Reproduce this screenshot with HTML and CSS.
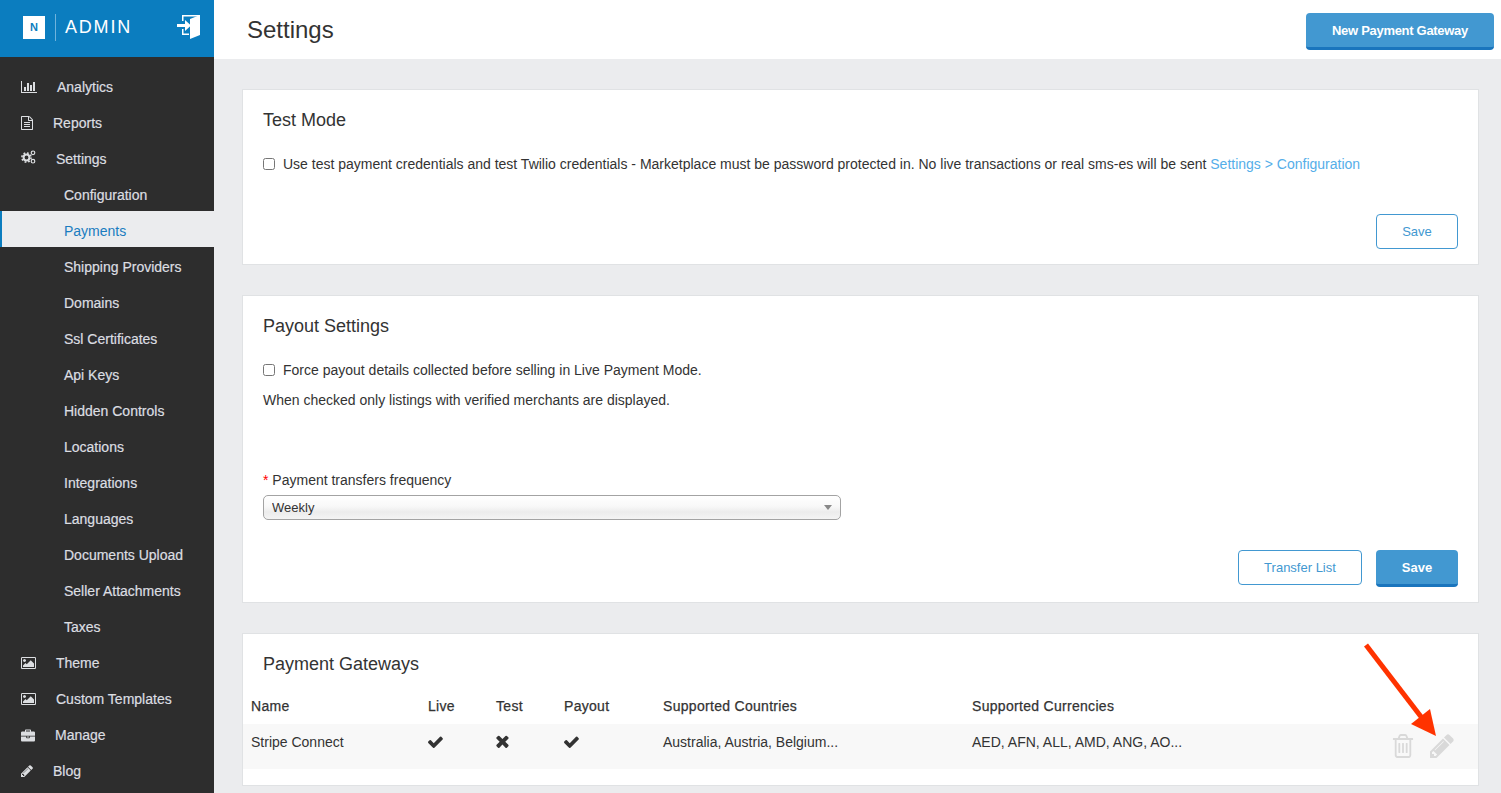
FILE: index.html
```html
<!DOCTYPE html>
<html lang="en">
<head>
    <meta charset="UTF-8">
    <meta name="viewport" content="width=device-width, initial-scale=1.0">
    <title>Settings</title>
    <link rel="stylesheet" href="styles.css">
</head>
<body>
    <svg class="sprites" width="0" height="0">
        <symbol id="icon-picture" viewBox="-64 128 1920 1536"><path d="M576 576q0 80-56 136t-136 56-136-56-56-136 56-136 136-56 136 56 56 136zm1024 384v448h-1408v-192l320-320 160 160 512-512zm96-704h-1600q-13 0-22.500 9.500t-9.500 22.500v1216q0 13 9.500 22.500t22.500 9.500h1600q13 0 22.500-9.500t9.500-22.500v-1216q0-13-9.500-22.500t-22.500-9.500zm160 32v1216q0 66-47 113t-113 47h-1600q-66 0-113-47t-47-113v-1216q0-66 47-113t113-47h1600q66 0 113 47t47 113z"/></symbol>
        <symbol id="icon-pencil" viewBox="128 128 1536 1536"><path d="M491 1536l91-91-235-235-91 91v107h128v128h107zm523-928q0-22-22-22-10 0-17 7l-542 542q-7 7-7 17 0 22 22 22 10 0 17-7l542-542q7-7 7-17zm-54-192l416 416-832 832h-416v-416zm683 96q0 53-37 90l-166 166-416-416 166-165q36-38 90-38 53 0 91 38l235 234q37 39 37 91z"/></symbol>
        <symbol id="icon-check" viewBox="120 300 1560 1200"><path d="M1671 566q0 40-28 68l-724 724-136 136q-28 28-68 28t-68-28l-136-136-362-362q-28-28-28-68t28-68l136-136q28-28 68-28t68 28l294 295 656-657q28-28 68-28t68 28l136 136q28 28 28 68z"/></symbol>
    </svg>

    <div class="layout">
        <aside class="sidebar">
            <div class="brand">
                <span class="brand-mark">N</span>
                <span class="brand-name">ADMIN</span>
                <svg class="brand-exit" viewBox="0 0 24 24" width="24" height="24" fill="#fff">
                    <path d="M5 0h18v1.500H6.500V6H5z"/>
                    <path d="M5 14h1.500v4.500H12V20H5z"/>
                    <path d="M13 4L23 0V20L13 24z"/>
                    <path d="M0 9h8V5l6 5.500-6 5.500v-4H0z"/>
                </svg>
            </div>
            <nav class="nav">
                <a class="nav-item">
                    <svg class="nav-icon" width="16" height="14" viewBox="0 0 2048 1792"><path d="M640 896v512h-256v-512h256zm384-512v1024h-256v-1024h256zm1024 1152v128h-2048v-1536h128v1408h1920zm-640-896v768h-256v-768h256zm384-384v1152h-256v-1152h256z"/></svg>
                    Analytics
                </a>
                <a class="nav-item">
                    <svg class="nav-icon" width="12" height="14" viewBox="128 0 1536 1792"><path d="M1596 380q28 28 48 76t20 88v1152q0 40-28 68t-68 28h-1344q-40 0-68-28t-28-68v-1600q0-40 28-68t68-28h896q40 0 88 20t76 48zm-444-244v376h376q-10-29-22-41l-313-313q-12-12-41-22zm384 1528v-1024h-416q-40 0-68-28t-28-68v-416h-768v1536h1280zm-1024-864q0-14 9-23t23-9h704q14 0 23 9t9 23v64q0 14-9 23t-23 9h-704q-14 0-23-9t-9-23v-64zm736 224q14 0 23 9t9 23v64q0 14-9 23t-23 9h-704q-14 0-23-9t-9-23v-64q0-14 9-23t23-9h704zm0 256q14 0 23 9t9 23v64q0 14-9 23t-23 9h-704q-14 0-23-9t-9-23v-64q0-14 9-23t23-9h704z"/></svg>
                    Reports
                </a>
                <a class="nav-item">
                    <svg class="nav-icon" width="15" height="14" viewBox="0 2 15 14">
                        <circle cx="5.500" cy="7.500" r="2.900" fill="none" stroke="#dcdee1" stroke-width="2"/>
                        <circle cx="5.500" cy="7.500" r="4.600" fill="none" stroke="#dcdee1" stroke-width="1.600" stroke-dasharray="1.800 1.800"/>
                        <circle cx="12" cy="2.800" r="1.800" fill="none" stroke="#dcdee1" stroke-width="1.200"/>
                        <circle cx="12" cy="11.200" r="1.800" fill="none" stroke="#dcdee1" stroke-width="1.200"/>
                    </svg>
                    Settings
                </a>
                <a class="nav-sub">Configuration</a>
                <a class="nav-sub active">Payments</a>
                <a class="nav-sub">Shipping Providers</a>
                <a class="nav-sub">Domains</a>
                <a class="nav-sub">Ssl Certificates</a>
                <a class="nav-sub">Api Keys</a>
                <a class="nav-sub">Hidden Controls</a>
                <a class="nav-sub">Locations</a>
                <a class="nav-sub">Integrations</a>
                <a class="nav-sub">Languages</a>
                <a class="nav-sub">Documents Upload</a>
                <a class="nav-sub">Seller Attachments</a>
                <a class="nav-sub">Taxes</a>
                <a class="nav-item">
                    <svg class="nav-icon" width="15" height="12"><use href="#icon-picture"/></svg>
                    Theme
                </a>
                <a class="nav-item">
                    <svg class="nav-icon" width="15" height="12"><use href="#icon-picture"/></svg>
                    Custom Templates
                </a>
                <a class="nav-item">
                    <svg class="nav-icon" width="14" height="13" viewBox="0 128 1792 1536"><path d="M640 384h512v-128h-512v128zm1152 640v480q0 66-47 113t-113 47h-1472q-66 0-113-47t-47-113v-480h672v160q0 26 19 45t45 19h320q26 0 45-19t19-45v-160h672zm-768 0v128h-256v-128h256zm768-480v384h-1792v-384q0-66 47-113t113-47h352v-160q0-40 28-68t68-28h576q40 0 68 28t28 68v160h352q66 0 113 47t47 113z"/></svg>
                    Manage
                </a>
                <a class="nav-item">
                    <svg class="nav-icon" width="12" height="12"><use href="#icon-pencil"/></svg>
                    Blog
                </a>
            </nav>
        </aside>

        <div class="page">
            <header class="topbar">
                <h1>Settings</h1>
                <button class="btn btn-primary btn-new">New Payment Gateway</button>
            </header>

            <main class="content">
                <section class="card card-test">
                    <h2>Test Mode</h2>
                    <label class="check-row">
                        <input type="checkbox">
                        <span>Use test payment credentials and test Twilio credentials - Marketplace must be password protected in. No live transactions or real sms-es will be sent <a class="link">Settings &gt; Configuration</a></span>
                    </label>
                    <div class="card-actions">
                        <button class="btn btn-outline btn-save">Save</button>
                    </div>
                </section>

                <section class="card card-payout">
                    <h2>Payout Settings</h2>
                    <label class="check-row">
                        <input type="checkbox">
                        <span>Force payout details collected before selling in Live Payment Mode.</span>
                    </label>
                    <p class="hint">When checked only listings with verified merchants are displayed.</p>
                    <label class="field-label"><span class="required">*</span> Payment transfers frequency</label>
                    <div class="select-wrap">
                        <select>
                            <option>Weekly</option>
                        </select>
                    </div>
                    <div class="card-actions">
                        <button class="btn btn-outline btn-transfer">Transfer List</button>
                        <button class="btn btn-primary btn-save">Save</button>
                    </div>
                </section>

                <section class="card card-gateways">
                    <h2>Payment Gateways</h2>
                    <table class="gateways">
                        <thead>
                            <tr>
                                <th class="col-name">Name</th>
                                <th class="col-flag">Live</th>
                                <th class="col-flag">Test</th>
                                <th class="col-payout">Payout</th>
                                <th class="col-countries">Supported Countries</th>
                                <th class="col-currencies">Supported Currencies</th>
                                <th></th>
                            </tr>
                        </thead>
                        <tbody>
                            <tr>
                                <td>Stripe Connect</td>
                                <td><svg class="flag" width="15" height="12"><use href="#icon-check"/></svg></td>
                                <td><svg class="flag" width="13" height="13" viewBox="300 300 1200 1260"><path d="M1490 1322q0 40-28 68l-136 136q-28 28-68 28t-68-28l-294-294-294 294q-28 28-68 28t-68-28l-136-136q-28-28-28-68t28-68l294-294-294-294q-28-28-28-68t28-68l136-136q28-28 68-28t68 28l294 294 294-294q28-28 68-28t68 28l136 136q28 28 28 68t-28 68l-294 294 294 294q28 28 28 68z"/></svg></td>
                                <td><svg class="flag" width="15" height="12"><use href="#icon-check"/></svg></td>
                                <td>Australia, Austria, Belgium...</td>
                                <td>AED, AFN, ALL, AMD, ANG, AO...</td>
                                <td class="row-actions">
                                    <svg class="action trash" width="22" height="24" viewBox="128 128 1536 1536" preserveAspectRatio="none"><path d="M704 736v576q0 14-9 23t-23 9h-64q-14 0-23-9t-9-23v-576q0-14 9-23t23-9h64q14 0 23 9t9 23zm256 0v576q0 14-9 23t-23 9h-64q-14 0-23-9t-9-23v-576q0-14 9-23t23-9h64q14 0 23 9t9 23zm256 0v576q0 14-9 23t-23 9h-64q-14 0-23-9t-9-23v-576q0-14 9-23t23-9h64q14 0 23 9t9 23zm128 724v-948h-896v948q0 22 7 40.500t14.500 27 10.500 8.500h832q3 0 10.500-8.500t14.500-27 7-40.500zm-672-1076h448l-48-117q-7-9-17-11h-317q-10 2-17 11zm928 32v64q0 14-9 23t-23 9h-96v948q0 83-47 143.500t-113 60.500h-832q-66 0-113-58.500t-47-141.500v-952h-96q-14 0-23-9t-9-23v-64q0-14 9-23t23-9h309l70-167q15-37 54-63t79-26h320q40 0 79 26t54 63l70 167h309q14 0 23 9t9 23z"/></svg>
                                    <svg class="action" width="24" height="24"><use href="#icon-pencil"/></svg>
                                </td>
                            </tr>
                        </tbody>
                    </table>
                </section>
            </main>
        </div>
    </div>

    <!-- annotation arrow drawn over the page -->
    <svg class="arrow" width="100" height="110" viewBox="0 0 100 110">
        <path d="M2 2L58 75" stroke="#ff3300" stroke-width="5" fill="none"/>
        <path d="M72 93L47 81L66 66z" fill="#ff3300"/>
    </svg>
</body>
</html>
```

FILE: styles.css
```css
* {
    box-sizing: border-box;
}
html, body {
    height: 100%;
}
body {
    margin: 0;
    overflow: hidden;
    font-family: "Liberation Sans", Arial, sans-serif;
    font-size: 14px;
    color: #333;
    background: #ebecee;
}
.sprites {
    position: absolute;
}
.layout {
    display: flex;
    height: 793px;
}

/* sidebar */
.sidebar {
    flex: 0 0 214px;
    background: #2d2d2d;
    overflow: hidden;
}
.brand {
    display: flex;
    align-items: center;
    height: 57px;
    padding: 0 0 3px 23px;
    background: #0b7dbf;
}
.brand-mark {
    width: 22px;
    height: 23px;
    background: #fff;
    color: #0b7dbf;
    font-size: 11px;
    font-weight: bold;
    line-height: 23px;
    text-align: center;
}
.brand-name {
    margin-left: 10px;
    padding-left: 9px;
    border-left: 1px solid #6fb3dc;
    color: #fff;
    font-size: 18px;
    line-height: 27px;
    letter-spacing: 1.800px;
}
.brand-exit {
    margin-left: auto;
    margin-right: 13px;
}
.nav {
    padding-top: 10px;
}
.nav-item,
.nav-sub {
    display: flex;
    align-items: center;
    height: 36px;
    padding-top: 4px;
    color: #dcdee1;
    -webkit-text-stroke: 0.2px #dcdee1;
}
.nav-item {
    gap: 20px;
    padding-left: 21px;
}
.nav-sub {
    padding-left: 64px;
}
.nav-sub.active {
    padding-left: 62px;
    border-left: 2px solid #0b7dbf;
    background: #ebecee;
    color: #1a7cc0;
    -webkit-text-stroke: 0;
}
.nav-icon {
    flex: none;
    overflow: visible;
    fill: #dcdee1;
}

/* top bar */
.page {
    flex: 1;
    min-width: 0;
}
.topbar {
    display: flex;
    align-items: center;
    justify-content: space-between;
    height: 59px;
    padding: 0 7px 0 33px;
    background: #fff;
}
.topbar h1 {
    margin: 0;
    font-size: 24px;
    font-weight: normal;
    color: #333;
}

/* buttons */
.btn {
    border-radius: 4px;
    font-family: inherit;
    font-size: 13px;
}
.btn-primary {
    border: 0;
    border-bottom: 3px solid #1a75bd;
    background: #4298d1;
    color: #fff;
    font-weight: bold;
}
.btn-outline {
    border: 1px solid #4298d1;
    background: #fff;
    color: #4298d1;
}
.btn-new {
    width: 188px;
    height: 37px;
    margin-top: 4px;
    letter-spacing: -0.3px;
}
.btn-save {
    width: 82px;
}
.btn-transfer {
    width: 124px;
}
.btn-outline {
    height: 35px;
}
.btn-primary.btn-save {
    height: 37px;
}

/* cards */
.content {
    padding: 30px 22px 0 28px;
}
.card {
    margin-bottom: 30px;
    padding: 20px 20px 15px;
    border: 1px solid #e0e2e4;
    background: #fff;
}
.card h2 {
    margin: 0;
    font-size: 18px;
    font-weight: normal;
    line-height: 20px;
}
.check-row {
    display: flex;
    align-items: center;
    gap: 8px;
    margin-top: 24px;
    line-height: 20px;
}
.check-row input {
    width: 12px;
    height: 12px;
    margin: 0;
}
.link {
    color: #55aee9;
}
.card-actions {
    display: flex;
    justify-content: flex-end;
    align-items: flex-start;
    gap: 14px;
}
.card-test .card-actions {
    margin-top: 40px;
}
.hint {
    margin: 10px 0 0;
    line-height: 20px;
}
.field-label {
    display: block;
    margin-top: 60px;
    line-height: 20px;
}
.required {
    color: #f00;
}
.select-wrap {
    position: relative;
    width: 578px;
    margin-top: 5px;
}
.select-wrap::after {
    content: "";
    position: absolute;
    top: 10px;
    right: 9px;
    border-top: 5px solid #888;
    border-left: 4px solid transparent;
    border-right: 4px solid transparent;
}
.select-wrap select {
    display: block;
    width: 100%;
    height: 25px;
    padding: 0 8px;
    border: 1px solid #a3a3a3;
    border-radius: 5px;
    appearance: none;
    background: linear-gradient(#fff 0%, #f8f8f8 45%, #ececec 70%, #f4f4f4 100%);
    font-family: inherit;
    font-size: 13px;
    color: #333;
}
.card-payout .card-actions {
    margin-top: 30px;
}

/* gateways table */
.card-gateways {
    padding: 20px 0 16px;
}
.card-gateways h2 {
    padding-left: 20px;
}
.gateways {
    width: 100%;
    margin-top: 14px;
    border-collapse: collapse;
    table-layout: fixed;
}
.gateways th {
    height: 36px;
    padding: 0 0 0 8px;
    text-align: left;
    font-weight: 500;
    letter-spacing: 0.3px;
    -webkit-text-stroke: 0.25px #333;
}
.gateways td {
    height: 45px;
    padding: 0 0 10px 8px;
    background: #f8f8f8;
}
.col-name {
    width: 177px;
}
.col-flag {
    width: 68px;
}
.col-payout {
    width: 99px;
}
.col-countries {
    width: 309px;
}
.col-currencies {
    width: 400px;
}
.flag {
    display: block;
    fill: #333;
}
.gateways td.row-actions {
    padding: 10px 24px 0 0;
    text-align: right;
    vertical-align: top;
    white-space: nowrap;
}
.action {
    fill: #d9d9d9;
}
.trash {
    margin-right: 12px;
}

.arrow {
    position: absolute;
    left: 1364px;
    top: 643px;
}
```
